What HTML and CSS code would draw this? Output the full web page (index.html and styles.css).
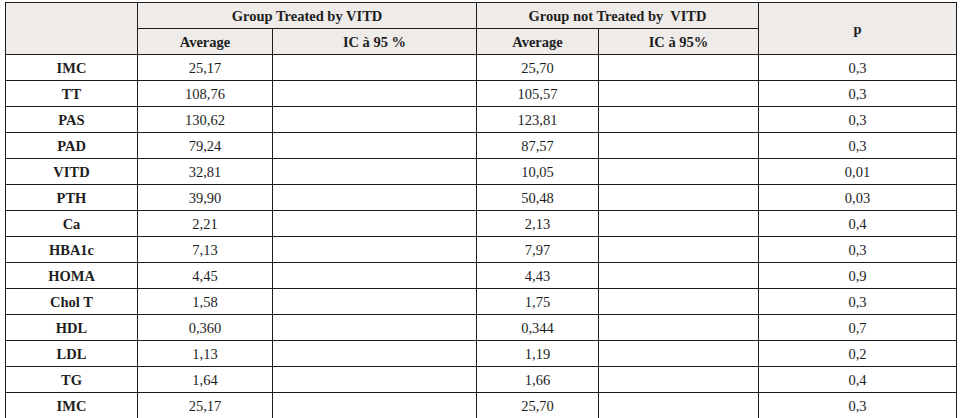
FILE: index.html
```html
<!DOCTYPE html>
<html>
<head>
<meta charset="utf-8">
<link rel="stylesheet" href="styles.css">
</head>
<body>
<table class="data">
  <colgroup>
    <col class="c1"><col class="c2"><col class="c3"><col class="c4"><col class="c5"><col class="c6">
  </colgroup>
  <thead>
    <tr>
      <th rowspan="2" class="blank"></th>
      <th colspan="2">Group Treated by VITD</th>
      <th colspan="2">Group not Treated by&nbsp; VITD</th>
      <th rowspan="2">p</th>
    </tr>
    <tr>
      <th>Average</th>
      <th>IC à 95 %</th>
      <th>Average</th>
      <th>IC à 95%</th>
    </tr>
  </thead>
  <tbody>
    <tr><th>IMC</th><td>25,17</td><td></td><td>25,70</td><td></td><td>0,3</td></tr>
    <tr><th>TT</th><td>108,76</td><td></td><td>105,57</td><td></td><td>0,3</td></tr>
    <tr><th>PAS</th><td>130,62</td><td></td><td>123,81</td><td></td><td>0,3</td></tr>
    <tr><th>PAD</th><td>79,24</td><td></td><td>87,57</td><td></td><td>0,3</td></tr>
    <tr><th>VITD</th><td>32,81</td><td></td><td>10,05</td><td></td><td>0,01</td></tr>
    <tr><th>PTH</th><td>39,90</td><td></td><td>50,48</td><td></td><td>0,03</td></tr>
    <tr><th>Ca</th><td>2,21</td><td></td><td>2,13</td><td></td><td>0,4</td></tr>
    <tr><th>HBA1c</th><td>7,13</td><td></td><td>7,97</td><td></td><td>0,3</td></tr>
    <tr><th>HOMA</th><td>4,45</td><td></td><td>4,43</td><td></td><td>0,9</td></tr>
    <tr><th>Chol T</th><td>1,58</td><td></td><td>1,75</td><td></td><td>0,3</td></tr>
    <tr><th>HDL</th><td>0,360</td><td></td><td>0,344</td><td></td><td>0,7</td></tr>
    <tr><th>LDL</th><td>1,13</td><td></td><td>1,19</td><td></td><td>0,2</td></tr>
    <tr><th>TG</th><td>1,64</td><td></td><td>1,66</td><td></td><td>0,4</td></tr>
    <tr><th>IMC</th><td>25,17</td><td></td><td>25,70</td><td></td><td>0,3</td></tr>
  </tbody>
</table>
</body>
</html>
```
FILE: styles.css
```css
html, body {
  margin: 0;
  padding: 0;
  background: #ffffff;
}
body {
  padding: 2px 0 0 5px;
  font-family: "Liberation Serif", "Times New Roman", serif;
  font-size: 14.5px;
  color: #1e1e1e;
}
.data {
  border-collapse: collapse;
  table-layout: fixed;
  width: 951px;
}
.c1 { width: 132px; }
.c2 { width: 135px; }
.c3 { width: 204px; }
.c4 { width: 122px; }
.c5 { width: 160px; }
.c6 { width: 198px; }
.data th, .data td {
  border: 1px solid #1c1c1c;
  text-align: center;
  vertical-align: middle;
  padding: 0;
  height: 25px;
  line-height: 16px;
}
.data tbody tr { height: 25.875px; }
.data thead tr { height: 26px; }
.data thead th {
  background: #eeebe9;
  font-weight: bold;
}
.data tbody th {
  font-weight: bold;
}
.data td {
  font-weight: normal;
}
```
